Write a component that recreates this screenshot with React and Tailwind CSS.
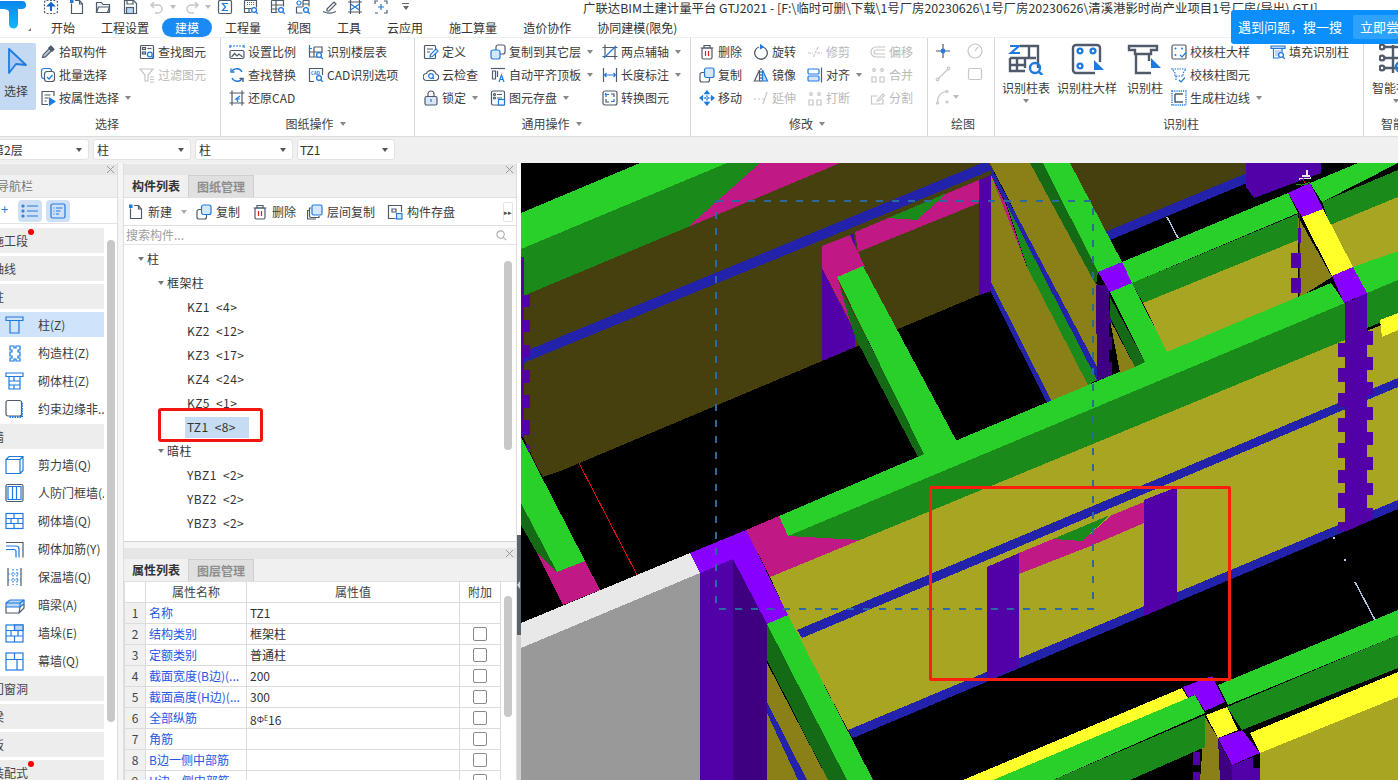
import React from "react";

const G = "#4f5b6b";
const B = "#1f7ae0";
const L = "#c6c6c6";

const S = ({ children, sw = 1.2, c = G }) => (
  <svg viewBox="0 0 16 16" fill="none" stroke={c} strokeWidth={sw} className="w-[16px] h-[16px] flex-none">
    {children}
  </svg>
);
const Mag = ({ x = 11, y = 11, r = 2.4 }) => (
  <g stroke={B} strokeWidth="1.3" fill="#fff">
    <circle cx={x} cy={y} r={r} />
    <path d={`M${x + r * 0.7} ${y + r * 0.7}l2.2 2.2`} />
  </g>
);

const icons = {
  upload: <S><rect x="1.5" y="1.5" width="13" height="13" rx="2" strokeDasharray="2 1.4" /><path d="M8 12V6" stroke="#1565c8" strokeWidth="2" /><path d="M4.5 7L8 3.5 11.5 7z" fill="#1565c8" stroke="#1565c8" /></S>,
  newdoc: <S><path d="M2.5 4.5v10h11V5l-3-3.5H6" /><path d="M10.5 1.5V5h3" /><rect x="1" y="0.5" width="3.5" height="3.5" fill={B} stroke="none" /></S>,
  folder: <S><path d="M1.5 13.5V3.5h5l1.5 2h6.5v8z" fill="#eef1f5" /><path d="M1.5 13.5l2-5.5h11l-2 5.5z" fill="#fff" /></S>,
  save: <S><path d="M2.5 1.5h9l3 3v10h-12z" /><rect x="4.5" y="8.5" width="7" height="6" fill="#bcd6f5" stroke={G} /><path d="M5 2v3h6V2" /></S>,
  undo: <S c={L} sw={1.5}><path d="M5 3L2 6l3 3M2 6h7a4 4 0 010 8H6" /></S>,
  redo: <S c={L} sw={1.5}><path d="M11 3l3 3-3 3M14 6H7a4 4 0 000 8h3" /></S>,
  sigma: <S><rect x="1.5" y="1.5" width="13" height="13" rx="1.5" /><path d="M11 4.5H5.5L8.5 8l-3 3.5H11" stroke={B} /></S>,
  tableA: <S><path d="M1.5 1.5h12v7M1.5 1.5v12h7M1.5 9.5h7M6 9.5v4" /><path d="M4 3.5h8M4 5.5h8" stroke={B} strokeDasharray="1 1" /><Mag /></S>,
  tableB: <S><path d="M1.5 1.5h12v6M1.5 1.5v12h6M1.5 6h12M6 1.5v12M1.5 10h6" /><Mag /></S>,
  tableC: <S><path d="M8 1.5h6v6M1.5 8v6h6M1.5 8h6M8 1.5V8M8 5h6" /><circle cx="4" cy="4" r="2" stroke={B} /><Mag /></S>,
  pencil: <S><path d="M1 12.5c4 2 9 2 13 0" /><path d="M5 10l7-7 2 2-7 7H5z" fill="#fff" /></S>,
  lines: <S><path d="M3.5 1v14M12.5 1v14M1 3h14M1 13h14" /><path d="M3.5 5l9 6M3.5 11l9-6" stroke={B} /></S>,
  dashplus: <S><path d="M2 5V2h3M11 2h3v3M14 11v3h-3M5 14H2" /><path d="M8 5v6M5 8h6" stroke={B} sw="1.5" /></S>,

  pick: <S><path d="M2.5 13.5l.7-2.8 6-6 2.2 2.2-6 6z" fill="#b9c4d2" /><path d="M9 2.8l4.3 4.3M10.8 2l3.2 3.2-2 2L8.8 4z" fill={G} /></S>,
  batch: <S><rect x="1.5" y="1.5" width="10" height="10" rx="2.5" stroke={B} /><rect x="4.5" y="4.5" width="10" height="10" rx="2.5" fill="#fff" /><path d="M7 10l2 2 3.5-4" stroke={B} /></S>,
  attr: <S><path d="M14 6V1.5H2v13h6" /><path d="M4.5 5h6M4.5 8h4M4.5 11h2" /><path d="M9.5 8l5.5 3.5-5.5 3.5z" fill={B} stroke={B} /></S>,
  find: <S><rect x="1.5" y="1.5" width="13" height="13" rx="1" /><rect x="3.5" y="3.5" width="3" height="2" /><rect x="3.5" y="8" width="3" height="2" /><path d="M8.5 4.5h4" /><Mag x={10.8} y={10.5} /></S>,
  filter: <S c={L}><path d="M1 2h13L9 8v6H6V8z" /><path d="M11 10h4M11 12.5h4M11 15h4" /></S>,
  scale: <S><path d="M1 2h14" stroke={B} strokeDasharray="2 1" /><path d="M1 1v3M15 1v3" stroke={B} /><rect x="1" y="6.5" width="14" height="8" rx="1.5" /><path d="M2.5 13l3-3.5 2.5 2.5 2-2 3.5 3" /></S>,
  floors: <S><path d="M1.5 3v10h10M6 3h8v6M6 3v10M1.5 8H14" /><path d="M1.5 1v3.5h2.5" stroke={B} /><Mag /></S>,
  replace: <S c={B} sw={1.4}><path d="M13 5a6 6 0 00-10-1M3 11a6 6 0 0010 1" /><path d="M2 1.5V5h3.5" /><path d="M14 15v-3.500h-3.500" stroke={G} /></S>,
  cad: <S><path d="M6 14.5H1.500v-13h13V8" /><text x="3" y="7.5" fontSize="4.500" fill={B} stroke="none" fontWeight="700">CAD</text><Mag /></S>,
  restore: <S><path d="M3 0.500v15M13 0.500v15M0.500 3h15M0.500 13h15" /><path d="M11 6L7 9l4 0M7.500 9l1.500 3" stroke={B} /></S>,
  define: <S><rect x="1.5" y="1.5" width="11" height="13" rx="1" /><path d="M4 5h6M4 8h3" /><path d="M7 13l.5-2.500 5.500-5.500 2 2-5.500 5.500z" fill="#fff" stroke={B} /></S>,
  cloud: <S><path d="M4 13.500a3.500 3.500 0 01-.5-7A5 5 0 0113 7a3.300 3.300 0 010 6.500z" /><circle cx="8" cy="9" r="2.300" stroke={B} /><path d="M9.500 10.500l1.500 1.500" stroke={B} /></S>,
  lock: <S><rect x="2" y="6.500" width="12" height="8.500" rx="1.500" fill="#d8e7fa" /><path d="M5 6.500V4a3 3 0 016 0v2.500" /><path d="M8 9v3" stroke={B} sw="1.5" /></S>,
  copyto: <S><rect x="6" y="1" width="9" height="9" rx="2" /><rect x="1" y="6" width="9" height="9" rx="2" fill="#d7e7fb" stroke={B} /></S>,
  autoalign: <S><path d="M1 1.500h14" /><path d="M2.500 4v8h3V4zM7.500 4v6" /><path d="M9 15l2.500-7L14 15M10 12.500h3" stroke={B} /></S>,
  store: <S><rect x="1.5" y="1" width="13" height="14" rx="1.500" /><circle cx="4.500" cy="4.500" r="1" /><circle cx="4.500" cy="8" r="1" /><path d="M7 4.500h5M7 8h5" /><rect x="8.500" y="9.500" width="6" height="5.500" fill="#fff" stroke={B} /></S>,
  axis: <S><path d="M3 0.500v12M13 3.500v12M0.500 3.500h15M0.500 12.500h15" /><path d="M2 14L14 2" stroke={B} sw="1.6" /></S>,
  dim: <S><path d="M1.500 1v14M14.500 1v14" /><path d="M3 8h10M4.500 6L2.500 8l2 2M11.500 6l2 2-2 2" stroke={B} /></S>,
  convert: <S><rect x="1" y="1" width="14" height="14" rx="2" /><path d="M4 7V4.500h3M4 3l-1 2M12 9v2.500H9" stroke={B} sw="1.4" /><path d="M9 4h3v3M7 12H4V9" /></S>,
  del: <S><path d="M1.500 4h13M5 4V1.500h6V4" /><rect x="3" y="4" width="10" height="11" rx="1.500" /><path d="M6.500 7v5M9.500 7v5" stroke="#e02020" sw="1.300" /></S>,
  rotate: <S sw={1.3}><path d="M10 3a6.300 6.300 0 11-4 0" /><path d="M7 0.500L10 3 7 5" stroke={B} fill={B} /></S>,
  copy: <S><rect x="5.500" y="1" width="9.500" height="9.500" rx="2" fill="#d7e7fb" stroke={B} /><path d="M5 5.500H3a2 2 0 00-2 2V13a2 2 0 002 2h5.500a2 2 0 002-2v-2" /></S>,
  mirror: <S><path d="M6.500 3L1.500 14h5z" /><path d="M9.500 3l5 11h-5z" fill="#b6d2f5" stroke={B} /><path d="M8 1v14" strokeDasharray="2 1" /></S>,
  move: <S c={B} sw={1.3}><path d="M8 2v12M2 8h12" strokeDasharray="2 1.200" /><path d="M6 3.500L8 1l2 2.500zM6 12.500L8 15l2-2.500zM3.500 6L1 8l2.500 2zM12.500 6L15 8l-2.500 2z" fill={B} /></S>,
  trim: <S c={L}><path d="M1 9h5M10 9h5M11 3l-5 11" strokeDasharray="3 1" /></S>,
  extend: <S c={L}><path d="M1 9h2M5 9h2M9 9h3M14 2l-4 12" /></S>,
  align: <S><rect x="1" y="2" width="11" height="5" stroke={B} rx="1" /><rect x="1" y="9" width="11" height="5" rx="1" stroke={B} fill="#d7e7fb" /><path d="M14.500 0.500v15" /></S>,
  breakI: <S c={L}><circle cx="4" cy="4" r="1.300" /><circle cx="12" cy="4" r="1.300" /><path d="M2 15v-5h4v5zM10 15v-5h4v5z" /></S>,
  offset: <S c={L}><path d="M15 3H6a5 5 0 000 10h9M15 6H6a2 2 0 000 4h9" /></S>,
  merge: <S c={L}><circle cx="4" cy="3" r="1.300" /><circle cx="12" cy="3" r="1.300" /><path d="M2 15v-5h4v5zM10 15v-5h4v5z" /></S>,
  split: <S c={L}><path d="M13 9v5H1.500V6h6" /><path d="M7 11l1-2 5-5 1.500 1.500-5 5z" /></S>,
  point: <S><path d="M8 1v5M8 10v5M1 8h5M10 8h5" /><circle cx="8" cy="8" r="1.800" fill={B} stroke={B} /></S>,
  dial: <S c={L}><circle cx="8" cy="8" r="7" /><path d="M8 8l3-4" /></S>,
  seg: <S c={L}><path d="M3 13L13 3" /><circle cx="2.500" cy="13.500" r="1.300" /><circle cx="13.500" cy="2.500" r="1.300" /></S>,
  box: <S c={L}><rect x="1.500" y="2.500" width="13" height="11" rx="1.500" /></S>,
  arc: <S c={L}><path d="M2.500 13C2.500 7 6 3 11 2.500" /><circle cx="2.500" cy="14" r="1" /><circle cx="12" cy="2.500" r="1" /><circle cx="12" cy="13" r="1" /></S>,
  checkA: <S><rect x="1" y="1" width="14" height="14" rx="1.500" /><g fill={B} stroke="none"><circle cx="4.500" cy="4.500" r="1" /><circle cx="11" cy="4.500" r="1" /><circle cx="4.500" cy="11" r="1" /></g><path d="M9 11l2 2 4-4.500" stroke={B} /></S>,
  checkB: <S c={B}><path d="M1 2h14l-3 4v3H4V6z" strokeDasharray="1.500 1" /><path d="M5 9v4" strokeDasharray="1.500 1" /><path d="M8 13l2 2 4-4.500" /></S>,
  edge: <S c={B} sw={1.500}><rect x="1" y="1" width="14" height="14" strokeDasharray="1.200 1" /><path d="M4 4h8M4 4v8h8" stroke={G} /></S>,
  fill: <S><path d="M1 2h14v2.500H1z" stroke={B} fill="#bcd6f5" /><path d="M3.500 4.500V14h6M12 4.500v4" stroke={B} /><rect x="5" y="6" width="6" height="6" fill="#bcd6f5" stroke="none" /><Mag /></S>,
};

const Big = {
  table: (
    <svg viewBox="0 0 36 32" fill="none" stroke={G} strokeWidth="2.400" className="w-[36px] h-[32px]">
      <path d="M2 3h9L3 10h9" stroke={B} strokeWidth="2.200" />
      <path d="M12 3h18v22M21 3v11M2 15h26M2 15v13h15M2 22h15M9 15v13M17 15v10" />
      <circle cx="27" cy="25" r="5" stroke={B} />
      <path d="M31 29l3.500 3" stroke={B} />
    </svg>
  ),
  detail: (
    <svg viewBox="0 0 36 32" fill="none" strokeWidth="2.400" className="w-[36px] h-[32px]">
      <path d="M26 30H7a3 3 0 01-3-3V5a3 3 0 013-3h21a3 3 0 013 3v14" stroke={G} />
      <circle cx="11" cy="8" r="2.400" stroke={B} />
      <circle cx="24" cy="8" r="2.400" stroke={B} />
      <circle cx="11" cy="23" r="2.400" stroke={B} />
      <path d="M25 17l10 10H25z" fill={B} />
    </svg>
  ),
  column: (
    <svg viewBox="0 0 36 32" fill="none" strokeWidth="2.400" className="w-[36px] h-[32px]">
      <path d="M2 3h28v4H24v4H8V7H2z" stroke={G} />
      <path d="M9 11v19h15" stroke={G} />
      <path d="M22 11v7" stroke={G} />
      <path d="M24 15l10 10H24z" fill={B} />
    </svg>
  ),
  smart: (
    <svg viewBox="0 0 36 32" fill="none" strokeWidth="2.400" stroke={G} className="w-[36px] h-[32px]">
      <circle cx="3" cy="4" r="2.400" />
      <circle cx="3" cy="15" r="2.400" />
      <circle cx="3" cy="25" r="2.400" />
      <path d="M6 4h14M6 15h14M6 25h14M14 2v28" />
      <circle cx="22" cy="24" r="5" stroke={B} />
    </svg>
  ),
};

const Caret = ({ c = "border-t-[#888]" }) => (
  <span className={"inline-block w-0 h-0 border-x-[3.5px] border-x-transparent border-t-[4px] " + c} />
);

const Row = ({ i, t, caret, off }) => (
  <div className={"h-[23px] flex items-center gap-[3px] whitespace-nowrap " + (off ? "text-[#b9b9b9]" : "text-[#3c3c3c]")}>
    {icons[i]}
    <span>{t}</span>
    {caret && <span className="ml-[3px] flex"><Caret /></span>}
  </div>
);

const Col = ({ w, rows }) => (
  <div className={"flex flex-col pt-[2px] flex-none " + w}>
    {rows.map((r) => <Row key={r.t} {...r} />)}
  </div>
);

const Group = ({ w, label, caret, children, cl = "", lc = "" }) => (
  <div className={"relative h-[98px] flex-none flex flex-col border-r border-[#d6d6d6] " + w}>
    <div className={"flex h-[78px] " + cl}>{children}</div>
    <div className={"flex items-center justify-center gap-[6px] text-[#444] h-[16px] " + lc}>
      <span>{label}</span>
      {caret && <Caret />}
    </div>
  </div>
);

const BigBtn = ({ w, i, t, caret, ml = "" }) => (
  <div className={"flex flex-col items-center flex-none pt-[5px] " + w + " " + ml}>
    <div className="h-[32px]">{Big[i]}</div>
    <div className="mt-[4px] text-[#3c3c3c] whitespace-nowrap leading-[18px]">{t}</div>
    {caret && <div className="flex mt-[2px]"><Caret /></div>}
  </div>
);

const QUICK = [
  ["upload", "w-[26px]"], ["newdoc", "w-[26px]"], ["folder", "w-[27px]"], ["save", "w-[27px]"],
  ["undo", "w-[35px]", 1], ["redo", "w-[33px]", 1], ["sigma", "w-[26px]"], ["tableA", "w-[27px]"],
  ["tableB", "w-[25px]"], ["tableC", "w-[27px]"], ["pencil", "w-[25px]"], ["lines", "w-[26px]"], ["dashplus", "w-[29px]"],
];

const TABS = ["开始", "工程设置", "建模", "工程量", "视图", "工具", "云应用", "施工算量", "造价协作", "协同建模(限免)"];

const Header = () => (
  <div className="relative h-[38px] flex bg-white border-b border-[#efefef] flex-none">
    <div className="w-[43px] flex-none relative overflow-hidden">
      <svg viewBox="0 0 32 32" className="w-[32px] h-[32px]">
        <defs>
          <linearGradient id="lg" x1="0" y1="0" x2="0" y2="1">
            <stop offset="0" stopColor="#0a86ee" />
            <stop offset="1" stopColor="#16b6f6" />
          </linearGradient>
        </defs>
        <path d="M0 1H22a4 4 0 010 8H18V24a4.500 4.500 0 01-9 0V12C9 9.500 5 9 0 9z" fill="url(#lg)" />
        <path d="M31 28v3h-3z" fill="#777" />
      </svg>
    </div>
    <div className="flex-1 min-w-0 flex flex-col">
      <div className="h-[19px] flex items-start overflow-hidden">
        <div className="flex items-start w-[540px] flex-none -mt-[1px]">
          {QUICK.map(([k, w, car]) => (
            <div key={k} className={"flex items-center gap-[5px] flex-none " + w}>
              {icons[k]}
              {car && <span className="flex"><Caret c="border-t-[#bbb]" /></span>}
            </div>
          ))}
          <div className="flex flex-col items-center gap-[2px] pt-[4px]">
            <span className="w-[7px] h-[1px] bg-[#666]" />
            <Caret c="border-t-[#666]" />
          </div>
        </div>
        <div className="text-[12.4px] leading-[17px] text-[#333] whitespace-nowrap">
          广联达BIM土建计量平台 GTJ2021 - [F:\临时可删\下载\1号厂房20230626\1号厂房20230626\清溪港影时尚产业项目1号厂房(导出).GTJ]
        </div>
      </div>
      <div className="h-[19px] flex items-center gap-[26px] pl-[8px] text-[#333]">
        {TABS.map((t) =>
          t === "建模" ? (
            <span key={t} className="-mx-[13px] px-[13px] h-[19px] leading-[19px] rounded-full bg-[#1a8af5] text-white">{t}</span>
          ) : (
            <span key={t} className="whitespace-nowrap">{t}</span>
          )
        )}
      </div>
    </div>
    <div className="absolute left-[1231px] top-[10px] w-[170px] h-[34px] bg-[#0a8ffd] rounded-[3px] flex items-center pl-[7px] z-10 text-[13px] text-white">
      <span className="w-[115px] flex-none">遇到问题，搜一搜</span>
      <span className="bg-[#2ea1fd] h-[24px] leading-[24px] px-[7px] rounded-[2px] whitespace-nowrap">立即尝试</span>
    </div>
  </div>
);

const Ribbon = () => (
  <div className="h-[98px] flex bg-white flex-none overflow-hidden">
    <Group w="w-[221px]" label="选择" lc="pr-[6px]">
      <div className="w-[36px] h-[67px] mt-[5px] flex-none bg-[#c3daf2] rounded-r-[2px] flex flex-col items-center pt-[4px] pr-[4px]">
        <svg viewBox="0 0 24 28" className="w-[24px] h-[28px]">
          <path d="M5 2l17 16-10-1-7 9z" fill="#a9c9f0" stroke={B} strokeWidth="1.800" strokeLinejoin="round" />
        </svg>
        <span className="mt-[7px] text-[#3c3c3c] leading-[18px]">选择</span>
      </div>
      <div className="w-[4px] flex-none" />
      <Col w="w-[99px]" rows={[{ i: "pick", t: "拾取构件" }, { i: "batch", t: "批量选择" }, { i: "attr", t: "按属性选择", caret: true }]} />
      <Col w="w-[80px]" rows={[{ i: "find", t: "查找图元" }, { i: "filter", t: "过滤图元", off: true }]} />
    </Group>
    <Group w="w-[194px]" label="图纸操作" caret cl="pl-[8px]" lc="pr-[4px]">
      <Col w="w-[79px]" rows={[{ i: "scale", t: "设置比例" }, { i: "replace", t: "查找替换" }, { i: "restore", t: "还原CAD" }]} />
      <Col w="w-[100px]" rows={[{ i: "floors", t: "识别楼层表" }, { i: "cad", t: "CAD识别选项" }]} />
    </Group>
    <Group w="w-[276px]" label="通用操作" caret cl="pl-[8px]" lc="pr-[2px]">
      <Col w="w-[67px]" rows={[{ i: "define", t: "定义" }, { i: "cloud", t: "云检查" }, { i: "lock", t: "锁定", caret: true }]} />
      <Col w="w-[112px]" rows={[{ i: "copyto", t: "复制到其它层", caret: true }, { i: "autoalign", t: "自动平齐顶板", caret: true }, { i: "store", t: "图元存盘", caret: true }]} />
      <Col w="w-[80px]" rows={[{ i: "axis", t: "两点辅轴", caret: true }, { i: "dim", t: "长度标注", caret: true }, { i: "convert", t: "转换图元" }]} />
    </Group>
    <Group w="w-[237px]" label="修改" caret cl="pl-[8px]" lc="pr-[4px]">
      <Col w="w-[54px]" rows={[{ i: "del", t: "删除" }, { i: "copy", t: "复制" }, { i: "move", t: "移动" }]} />
      <Col w="w-[54px]" rows={[{ i: "rotate", t: "旋转" }, { i: "mirror", t: "镜像" }, { i: "extend", t: "延伸", off: true }]} />
      <Col w="w-[63px]" rows={[{ i: "trim", t: "修剪", off: true }, { i: "align", t: "对齐", caret: true }, { i: "breakI", t: "打断", off: true }]} />
      <Col w="w-[50px]" rows={[{ i: "offset", t: "偏移", off: true }, { i: "merge", t: "合并", off: true }, { i: "split", t: "分割", off: true }]} />
    </Group>
    <Group w="w-[67px]" label="绘图" cl="pl-[7px]" lc="pl-[4px]">
      <div className="flex flex-col pt-[1px] w-[32px] flex-none">
        {["point", "seg"].map((k) => <div key={k} className="h-[23px] flex items-center">{icons[k]}</div>)}
        <div className="h-[23px] flex items-center gap-[2px]">{icons.arc}<span className="flex"><Caret c="border-t-[#bbb]" /></span></div>
      </div>
      <div className="flex flex-col pt-[1px]">
        {["dial", "box"].map((k) => <div key={k} className="h-[23px] flex items-center">{icons[k]}</div>)}
      </div>
    </Group>
    <Group w="w-[369px]" label="识别柱" cl="pl-[7px]" lc="pl-[4px]">
      <BigBtn w="w-[48px]" i="table" t="识别柱表" caret />
      <BigBtn w="w-[60px]" ml="ml-[7px]" i="detail" t="识别柱大样" />
      <BigBtn w="w-[36px]" ml="ml-[10px]" i="column" t="识别柱" />
      <div className="w-[8px] flex-none" />
      <Col w="w-[99px]" rows={[{ i: "checkA", t: "校核柱大样" }, { i: "checkB", t: "校核柱图元" }, { i: "edge", t: "生成柱边线", caret: true }]} />
      <Col w="w-[90px]" rows={[{ i: "fill", t: "填充识别柱" }]} />
    </Group>
    <div className="relative h-[98px] flex-none w-[60px] flex flex-col">
      <div className="h-[78px] pt-[5px] pl-[8px] flex flex-col">
        <div className="h-[32px] pl-[7px]">{Big.smart}</div>
        <div className="mt-[4px] leading-[18px] text-[#3c3c3c] whitespace-nowrap">智能布置</div>
        <div className="flex mt-[2px] pl-[21px]"><Caret /></div>
      </div>
      <div className="h-[16px] pl-[17px] text-[#444] whitespace-nowrap">智能</div>
    </div>
  </div>
);

const Sel = ({ t, cl = "" }) => (
  <div className={"h-[21px] w-[98px] flex-none bg-white border border-[#e2e2e2] rounded-[3px] flex items-center justify-between pr-[6px] text-[#333] overflow-hidden " + cl}>
    <span className="whitespace-nowrap">{t}</span>
    <Caret c="border-t-[#555]" />
  </div>
);

const Toolbar = () => (
  <div className="h-[27px] flex-none bg-[#f0f0f0] border-t border-[#dcdcdc] flex items-center gap-[4px] pb-[1px]">
    <Sel t="第2层" cl="-ml-[9px] pl-[0px]" />
    <Sel t="柱" cl="pl-[3px]" />
    <Sel t="柱" cl="pl-[3px]" />
    <Sel t="TZ1" cl="pl-[2px]" />
  </div>
);

const Ic = ({ children }) => (
  <svg viewBox="0 0 20 20" fill="none" stroke={B} strokeWidth="1.200" className="w-[20px] h-[20px] flex-none">{children}</svg>
);

const navIcons = {
  col: <Ic><path d="M1 2h17v3.500H1zM5 5.500V18h9V5.500" fill="none" /></Ic>,
  gz: <Ic><path d="M5 3h4v2h2V3h4v4h-2v2h2v4h-2v2h2v3h-4v-2H9v2H5v-3h2v-2H5V9h2V7H5z" /></Ic>,
  qt: <Ic><path d="M1 2h17v3.500H1zM4 5.500V18h11V5.500M4 10h11M4 14h11M9 5.500V10M9 14v4" /></Ic>,
  ys: <Ic><rect x="1" y="1.500" width="15.500" height="15.500" rx="2" stroke={G} /><path d="M17 4v14H4" strokeDasharray="1.500 1" strokeWidth="2" /></Ic>,
  jl: <Ic><path d="M1 4.500h14v14H1zM1 4.500L4 1.500h14v14l-3 3M15 4.500l3-3" /></Ic>,
  rf: <Ic><rect x="1" y="1.500" width="17" height="17" rx="1.500" stroke={G} /><path d="M3 3.500h13v13H3zM7.500 3.500v13M11.500 3.500v13" /></Ic>,
  qq: <Ic><rect x="1" y="2.500" width="17" height="15" /><path d="M1 7.500h17M1 12.500h17M9 2.500v5M6 7.500v5M13 7.500v5M9 12.500v5" /></Ic>,
  jj: <Ic><path d="M1 3.500h17v15" stroke={G} /><path d="M1 7h10c2 0 3 1 3 3v8.500M1 10.500h8c1 0 2 1 2 2v6" /></Ic>,
  bw: <Ic><path d="M3 1v18M16 1v18" stroke={G} /><path d="M8 2v16M12 2v16M3 7h13M3 13h13" strokeDasharray="1.500 1.500" /></Ic>,
  al: <Ic><path d="M1 8l4-3h14v4l-4 3H1z" fill="#b9d5f7" /><path d="M1 8h14v4M15 8l4-3" /><path d="M1 12v6h13l1-6M14 18l5-5V9" stroke={G} /></Ic>,
  qd: <Ic><rect x="1" y="2" width="17" height="17" /><rect x="9.500" y="2" width="8.500" height="5.500" fill="#bcd6f5" /><path d="M1 7.500h17M1 13h17M9.500 2v5.500M6 7.500V13M13 7.500V13M9.500 13v6" /></Ic>,
  mq: <Ic><rect x="1" y="2" width="17" height="17" /><path d="M1 8.500h17M9.500 2v6.500M9.500 8.500H1M12 8.500V19" /></Ic>,
};

const NAV = [
  { s: "施工段", dot: 1 }, { s: "轴线" }, { s: "柱" },
  { i: "col", t: "柱(Z)", sel: 1 }, { i: "gz", t: "构造柱(Z)" }, { i: "qt", t: "砌体柱(Z)" }, { i: "ys", t: "约束边缘非.." },
  { s: "墙" },
  { i: "jl", t: "剪力墙(Q)" }, { i: "rf", t: "人防门框墙(." }, { i: "qq", t: "砌体墙(Q)" }, { i: "jj", t: "砌体加筋(Y)" },
  { i: "bw", t: "保温墙(Q)" }, { i: "al", t: "暗梁(A)" }, { i: "qd", t: "墙垛(E)" }, { i: "mq", t: "幕墙(Q)" },
  { s: "门窗洞" }, { s: "梁" }, { s: "板" }, { s: "装配式", dot: 1 },
];

const PanelTop = () => (
  <div className="h-[12px] flex-none bg-[#e6e6e6] flex items-center justify-end pr-[2px] border-t border-[#f5f5f5]">
    <svg viewBox="0 0 9 9" className="w-[9px] h-[9px]" stroke="#9a9a9a" strokeWidth="1"><path d="M1 1l7 7M8 1L1 8" /></svg>
  </div>
);

const Nav = () => (
  <div className="w-[118px] flex-none bg-white border-r border-[#dedede] flex flex-col overflow-hidden">
    <PanelTop />
    <div className="h-[22px] flex-none bg-[#f0f0f0] text-[#777] flex items-center overflow-hidden">
      <span className="-ml-[3px] whitespace-nowrap">导航栏</span>
    </div>
    <div className="h-[27px] flex-none border-y border-[#e4e4e4] flex items-center">
      <span className="w-[18px] flex-none text-[#1f7ae0] text-[13px] leading-[13px] -mt-[4px] pl-[1px]">+</span>
      <span className="w-[24px] h-[22px] bg-[#cfe0f4] rounded-[4px] flex items-center justify-center">
        <svg viewBox="0 0 18 14" className="w-[18px] h-[14px]" fill="none" stroke={B} strokeWidth="1.200"><path d="M6 2h11M6 7h11M6 12h11" /><circle cx="2" cy="2" r="1" /><circle cx="2" cy="7" r="1" /><circle cx="2" cy="12" r="1" /></svg>
      </span>
      <span className="ml-[4px] w-[24px] h-[22px] bg-[#cfe0f4] rounded-[4px] flex items-center justify-center">
        <svg viewBox="0 0 16 16" className="w-[16px] h-[16px]" fill="none" stroke={B} strokeWidth="1.200"><rect x="1" y="1" width="14" height="14" rx="1.500" /><path d="M3.500 5h1M6 5h6.500M3.500 8h1M6 8h4.500M3.500 11h1M6 11h3" /></svg>
      </span>
    </div>
    <div className="relative flex-1 pt-[4px] overflow-hidden">
      {NAV.map((n, k) =>
        n.s ? (
          <div key={k} className="relative h-[25px] mb-[3px] w-[104px] bg-[#ededed] flex items-center text-[#444]">
            <span className="-ml-[8px] whitespace-nowrap">{n.s}</span>
            {n.dot && <span className="absolute left-[28px] top-[1px] w-[6px] h-[6px] rounded-full bg-[#f00000]" />}
          </div>
        ) : (
          <div key={k} className={"h-[25px] mb-[3px] w-[104px] flex items-center pl-[5px] overflow-hidden whitespace-nowrap text-[#3c3c3c] " + (n.sel ? "bg-[#cfe3fb]" : "")}>
            {navIcons[n.i]}
            <span className="ml-[13px]">{n.t}</span>
          </div>
        )
      )}
      <div className="absolute left-[107px] top-[16px] w-[8px] h-[482px] rounded-[4px] bg-[#c8c8c8]" />
    </div>
  </div>
);

const Tabs = ({ a, b }) => (
  <div className="h-[23px] flex-none bg-[#f0f0f0] flex border-b border-[#e0e0e0]">
    <span className="w-[64px] h-[22px] flex items-center justify-center font-bold text-[#333]">{a}</span>
    <span className="w-[66px] h-[22px] flex items-center justify-center font-bold text-[#8e8e8e] bg-[#e0e0e0] border-x border-t border-[#cfcfcf]">{b}</span>
  </div>
);

const TOOLS = [
  [<S key="a"><path d="M2.500 4.500v10h11V5l-3-3.500H6" /><path d="M10.500 1.500V5h3" /><rect x="1" y="0.500" width="3.500" height="3.500" fill={B} stroke="none" /></S>, "新建", "w-[68px]", true],
  [icons.copy, "复制", "w-[56px]"],
  [icons.del, "删除", "w-[55px]"],
  [<S key="b"><rect x="5" y="1" width="10" height="10" rx="1.500" fill="#d7e7fb" stroke={B} /><path d="M4 4H2.500v8a1.500 1.500 0 001.500 1.500h8V12M2 6.500H0.500v8.500H9" /></S>, "层间复制", "w-[80px]"],
  [<S key="c"><path d="M14.500 8V1.500h-13v13h7" /><path d="M5 5h4v3H5z" /><rect x="9.500" y="9.500" width="5.500" height="5.500" fill="#d7e7fb" stroke={B} /></S>, "构件存盘", "w-[110px]"],
];

const TREE = [
  ["柱", "pl-[22px]", 1], ["框架柱", "pl-[42px]", 1],
  ["KZ1  <4>", "pl-[63px]"], ["KZ2  <12>", "pl-[63px]"], ["KZ3  <17>", "pl-[63px]"], ["KZ4  <24>", "pl-[63px]"], ["KZ5  <1>", "pl-[63px]"],
  ["TZ1  <8>", "pl-[63px]", 0, 1], ["暗柱", "pl-[42px]", 1],
  ["YBZ1  <2>", "pl-[63px]"], ["YBZ2  <2>", "pl-[63px]"], ["YBZ3  <2>", "pl-[63px]"],
];

const TreePanel = () => (
  <div className="relative h-[379px] flex-none bg-white border-b border-[#d4d4d4] flex flex-col overflow-hidden">
    <PanelTop />
    <Tabs a="构件列表" b="图纸管理" />
    <div className="h-[28px] flex-none flex items-center pl-[4px] border-b border-[#e0e0e0] text-[#3c3c3c] relative">
      {TOOLS.map(([ic, t, w, car]) => (
        <div key={t} className={"flex items-center gap-[4px] flex-none whitespace-nowrap " + w}>
          {ic}
          <span>{t}</span>
          {car && <span className="flex ml-[5px]"><Caret c="border-t-[#aaa]" /></span>}
        </div>
      ))}
      <span className="absolute right-[3px] top-[4px] w-[10px] h-[20px] border border-[#e4e4e4] rounded-[2px] flex items-center justify-center text-[7px] leading-[7px] text-[#444]">▸▸</span>
    </div>
    <div className="h-[19px] flex-none flex items-center justify-between px-[2px] pr-[9px] border-b border-[#e4e4e4] text-[#a0a0a0]">
      <span>搜索构件...</span>
      <svg viewBox="0 0 12 12" className="w-[11px] h-[11px]" fill="none" stroke="#aaa" strokeWidth="1.200"><circle cx="5" cy="5" r="4" /><path d="M8 8l3 3" /></svg>
    </div>
    <div className="relative flex-1 pt-[2px] text-[#333] overflow-hidden tracking-[0.4px]">
      {TREE.map(([t, p, arrow, sel]) => (
        <div key={t} className={"h-[24px] flex items-center relative whitespace-pre " + p}>
          {arrow && <span className="flex mr-[3px] -ml-[8px]"><Caret c="border-t-[#777]" /></span>}
          {sel ? <span className="absolute left-[61px] h-[21px] w-[64px] bg-[#c6dcf3] pl-[2px] flex items-center">{t}</span> : t}
        </div>
      ))}
      <div className="absolute right-[4px] top-[16px] w-[8px] h-[189px] rounded-[4px] bg-[#c8c8c8]" />
    </div>
    <div className="absolute left-[34px] top-[245px] w-[105px] h-[34px] border-[3px] border-[#f0150e] rounded-[3px]" />
  </div>
);

const PROPS = [
  ["名称", "TZ1", false], ["结构类别", "框架柱", true], ["定额类别", "普通柱", true], ["截面宽度(B边)(...", "200", true],
  ["截面高度(H边)(...", "300", true], ["全部纵筋", "steel", true], ["角筋", "", true], ["B边一侧中部筋", "", true], ["H边一侧中部筋", "", true],
];

const PropPanel = () => (
  <div className="relative flex-1 min-h-0 bg-white mt-[5px] flex flex-col overflow-hidden">
    <PanelTop />
    <Tabs a="属性列表" b="图层管理" />
    <div className="flex h-[21px] flex-none text-[#444] border-b border-[#dcdcdc] border-l border-l-[#dcdcdc] w-[377px]">
      <span className="w-[21px] flex-none border-r border-[#dcdcdc]" />
      <span className="w-[101px] flex-none border-r border-[#dcdcdc] text-center leading-[20px]">属性名称</span>
      <span className="w-[213px] flex-none border-r border-[#dcdcdc] text-center leading-[20px]">属性值</span>
      <span className="w-[41px] flex-none border-r border-[#dcdcdc] text-center leading-[20px]">附加</span>
    </div>
    {PROPS.map(([n, v, chk], k) => (
      <div key={n} className="flex h-[21px] flex-none border-b border-[#dcdcdc] border-l border-l-[#dcdcdc] w-[377px]">
        <span className="w-[21px] flex-none border-r border-[#dcdcdc] bg-[#f0f0f0] text-center text-[#444] leading-[20px]">{k + 1}</span>
        <span className="w-[101px] flex-none border-r border-[#dcdcdc] pl-[3px] text-[#2456e6] leading-[20px] whitespace-nowrap overflow-hidden">{n}</span>
        <span className="w-[213px] flex-none border-r border-[#dcdcdc] pl-[3px] text-[#333] leading-[20px]">
          {v === "steel" ? (
            <span>8<span className="text-[9px] align-[2px]">Φ</span><span className="text-[7px] align-[4px]">E</span>16</span>
          ) : v}
        </span>
        <span className="w-[41px] flex-none border-r border-[#dcdcdc] flex items-center justify-center">
          {chk && <span className="w-[14px] h-[14px] border border-[#8a8a8a] rounded-[2px] bg-white" />}
        </span>
      </div>
    ))}
    <div className="absolute right-[4px] top-[49px] w-[8px] h-[121px] rounded-[4px] bg-[#c8c8c8]" />
  </div>
);

const Splitter = () => (
  <div className="w-[4px] flex-none flex flex-col bg-white">
    <div className="h-[372px] flex-none" />
    <div className="h-[100px] flex-none bg-[#59626f] flex items-center"><span className="w-0 h-0 border-y-[4px] border-y-transparent border-r-[3px] border-r-[#cfd3d8]" /></div>
    <div className="flex-1 bg-[#cfcfcf]" />
  </div>
);

const C = {
  ol: "#46400f", lg: "#29d02a", dg: "#1a8a1a", dk: "#156b15", mg: "#c01884", pu: "#5200a8", pd: "#3e0080",
  pb: "#8800ff", bl: "#2222aa", yo: "#a8a522", yd: "#8a8018", ye: "#ffff2a", gr: "#999999", wh: "#e8e8e8",
};

const POLYS = [
  [C.ol, "521,296 688,227 840,163 995,163 979,295 563,470 543,477 539,470 523,437"],
  [C.ol, "1070,163 1247,163 1247,173 1105,232"],
  [C.bl, "1105,232 1247,173 1247,183 1110,240"],
  [C.pu, "1246,163 1321,163 1321,173 1254,198 1246,187"],
  [C.lg, "521,213 640,163 727,163 521,249"],
  [C.dg, "521,249 727,163 760,163 688,227 523,296 521,296"],
  [C.mg, "760,163 840,163 688,227"],
  [C.bl, "521,353 987,161 992,170 521,364"],
  [C.pu, "521,257 523.500,257 523.500,437 521,437"],
  [C.pu, "523,295 530,295 530,307 523,307"], [C.pu, "523,320 530,320 530,332 523,332"], [C.pu, "523,345 530,345 530,357 523,357"],
  [C.pu, "523,370 530,370 530,383 523,383"], [C.pu, "523,395 530,395 530,408 523,408"], [C.pu, "523,420 530,420 530,435 523,435"],
  [C.pu, "523,445 530,445 530,456 523,456"],
  [C.mg, "822,246 850,235 855,246 865,267 837,277 822,268"],
  [C.mg, "855,232 979,180 979,203 858,252"],
  [C.dg, "888,218 947,193 917,220"],
  [C.pu, "850,235 854,233 855,246"],
  [C.pu, "822,268 855,333 855,347 822,361"],
  [C.mg, "822,268 837,277 857,335"],
  [C.dk, "840,288 927,453 918,457 855,337"],
  [C.lg, "837,277 863,266 957,442 925,456"],

  [C.yd, "990,163 1030,163 1097,285 1097,372"],
  [C.bl, "990,165 1097,367 1097,382 1007,205 991,175"],
  [C.yd, "991,175 1027,267 1088,385 1052,402 991,282"],
  [C.mg, "991,175 1007,207 1027,267"],
  [C.dg, "1007,205 1097,380 1088,385 1027,267"],
  [C.bl, "991,282 1052,402 1047,403 991,292"],
  [C.pu, "979,180 991,175 991,291 979,295"],
  [C.lg, "521,437 585,561 557,572 521,503"],
  [C.dk, "521,503 557,572 537,553 521,525"],
  [C.mg, "537,553 557,572 585,561 600,590 563,605"],
  [C.dk, "1030,163 1043,163 1098,272 1096,285"],
  [C.lg, "1043,163 1070,163 1122,262 1098,272"],

  [C.yo, "1143,303 1298,240 1298,297 1167,352"],
  [C.yd, "1298,217 1332,277 1300,297"],
  [C.pu, "1298.500,213 1300,213 1300,297 1298.500,297"],
  [C.pu, "1298,228 1301,228 1301,243 1298,243"],
  [C.pu, "1291,253 1301,253 1301,268 1291,268"],
  [C.pu, "1291,278 1301,278 1301,293 1291,293"],
  [C.yo, "1330,225 1398,197 1398,257 1353,267"],
  [C.lg, "1122,262 1288,193 1298,213 1132,283"],
  [C.dg, "1132,283 1298,214 1298,240 1143,303"],
  [C.lg, "1310,183 1358,163 1398,163 1322,202"],
  [C.dg, "1322,202 1398,170 1398,197 1330,225"],
  [C.pb, "1288,193 1310,183 1323,209 1302,217"],
  [C.ye, "1302,217 1323,209 1353,267 1332,276"],
  [C.lg, "1353,267 1398,251 1398,280 1367,293"],
  [C.dg, "1367,293 1398,280 1398,315 1367,328"],

  [C.yo, "770,577 860,540 1345,340 1398,318 1398,500 848,730 790,620"],
  [C.ye, "1380,320 1398,313 1398,330 1382,337"],
  [C.bl, "848,730 1398,500 1398,509 853,738"],
  [C.bl, "797,630 1398,378 1398,387 802,638"],
  [C.dg, "788,536 1345,303 1345,340 860,540"],
  [C.lg, "779,516 955,441 1331,283 1345,303 788,536"],
  [C.mg, "746,530 779,516 788,536 860,540 770,577"],

  [C.yd, "1110,320 1135,367 1120,373"],
  [C.pd, "1096,285 1109,285 1109,310 1112,310 1112,323 1109,323 1109,337 1112,337 1112,350 1109,350 1109,362 1112,362 1112,375 1097,381"],
  [C.dk, "1110,297 1145,362 1135,367 1110,317"],
  [C.lg, "1110,292 1132,283 1167,352 1145,362"],
  [C.pb, "1098,272 1122,262 1132,283 1110,292"],

  [C.pu, "1345,303 1367,293 1367,331 1373,331 1373,345 1367,345 1367,357 1373,357 1373,370 1367,370 1367,382 1373,382 1373,395 1367,395 1367,407 1373,407 1373,420 1367,420 1367,432 1373,432 1373,445 1367,445 1367,457 1373,457 1373,470 1367,470 1367,483 1373,483 1373,495 1367,495 1367,508 1373,508 1373,518 1367,522 1345,532 1345,530 1338,532 1338,522 1345,522 1345,508 1338,508 1338,493 1345,493 1345,483 1338,483 1338,470 1345,470 1345,458 1338,458 1338,443 1345,443 1345,432 1338,432 1338,418 1345,418 1345,407 1338,407 1338,393 1345,393 1345,382 1338,382 1338,368 1345,368 1345,357 1338,357 1338,343 1345,343"],
  [C.pb, "1332,276 1353,267 1367,293 1344,303"],

  [C.pu, "987,567 1019,553 1019,667 987,680"],
  [C.pu, "1144,500 1177,487 1177,602 1144,616"],
  [C.mg, "1019,553 1053,539 1082,541 1112,515 1144,502 1144,523 1093,545 1019,574"],
  [C.dg, "1053,539 1110,515 1082,541"],

  [C.wh, "521,623 690,553 700,573 521,648"],
  [C.gr, "521,648 700,573 700,780 521,780"],
  [C.yd, "767,663 828,780 767,780"],
  [C.bl, "767,702 807,780 798,780 767,713"],
  [C.dk, "767,624 847,780 828,780 767,660"],
  [C.lg, "767,624 788,615 873,780 847,780"],
  [C.pu, "700,573 733,559 733,780 700,780"],
  [C.pd, "733,559 767,624 767,780 733,780"],
  [C.pb, "690,553 746,530 788,615 767,624 733,559 700,573"],

  [C.ye, "1250,733 1398,672 1398,697 1260,753"],
  [C.yo, "1260,753 1398,697 1398,780 1260,780"],
  [C.pu, "1232,765 1253,757 1253,768 1260,768 1260,780 1232,780"],
  [C.pd, "1218,740 1232,765 1232,780 1220,780"],
  [C.lg, "1218,685 1398,610 1398,635 1228,705"],
  [C.dg, "1227,707 1398,635 1398,668 1242,730"],
  [C.pu, "1193,752 1200,752 1200,765 1193,765"],
  [C.pu, "1193,772 1200,772 1200,780 1193,780"],
  [C.yd, "1205,717 1218,738 1220,780 1200,780"],
  [C.ye, "963,780 1182,688 1188,698 993,780"],
  [C.lg, "993,780 1195,695 1205,713 1053,780"],
  [C.dg, "1053,780 1205,715 1205,747 1130,780"],
  [C.pb, "1183,687 1212,676 1225,702 1205,711 1195,695 1188,697"],
  [C.ye, "1206,715 1227,707 1238,730 1218,738"],
  [C.pb, "1218,738 1242,730 1260,753 1232,765"],
];

const Scene = () => (
  <svg viewBox="521 163 877 617" className="block w-[877px] h-[617px] bg-black" shapeRendering="crispEdges">
    <path d="M579 463L637 575" stroke="#e01010" strokeWidth="1" />
    {POLYS.map(([f, p], k) => <polygon key={k} fill={f} points={p} />)}
    <path d="M1167 217L1178 238M1355 582L1375 620" stroke="#a9c4dc" strokeWidth="1.500" />
    <path d="M1333 538h2M1344 560h2" stroke="#b9d0e4" strokeWidth="1.500" />
    <path d="M1299 179l12-1M1307 170v6M1302 176h8" stroke="#e8e8e8" strokeWidth="1.200" />
    <path d="M1296 184q8 3 14-2" stroke="#1aa01a" fill="none" strokeWidth="1" />
    <path d="M1303 178l3 8" stroke="#e01010" strokeWidth="1" />
    <rect x="716" y="201" width="377" height="408" fill="none" stroke="#2b6aa0" strokeWidth="2" strokeDasharray="7 9" />
  </svg>
);

const Canvas = () => (
  <div className="relative flex-1 min-w-0 overflow-hidden bg-black">
    <Scene />
    <div className="absolute left-[408px] top-[323px] w-[302px] h-[195px] border-[3px] border-[#fb1e10] rounded-[2px]" />
  </div>
);

export default function App() {
  return (
    <div className="w-[1398px] h-[780px] overflow-hidden flex flex-col bg-white text-[12px] leading-[16px] [font-family:'Noto_Sans_CJK_SC','Noto_Sans',sans-serif] relative">
      <Header />
      <Ribbon />
      <Toolbar />
      <div className="flex-1 min-h-0 flex bg-[#f5f5f5]">
        <Nav />
        <div className="w-[5px] flex-none" />
        <div className="w-[394px] flex-none flex flex-col border-x border-[#dedede]">
          <TreePanel />
          <PropPanel />
        </div>
        <Splitter />
        <Canvas />
      </div>
    </div>
  );
}
